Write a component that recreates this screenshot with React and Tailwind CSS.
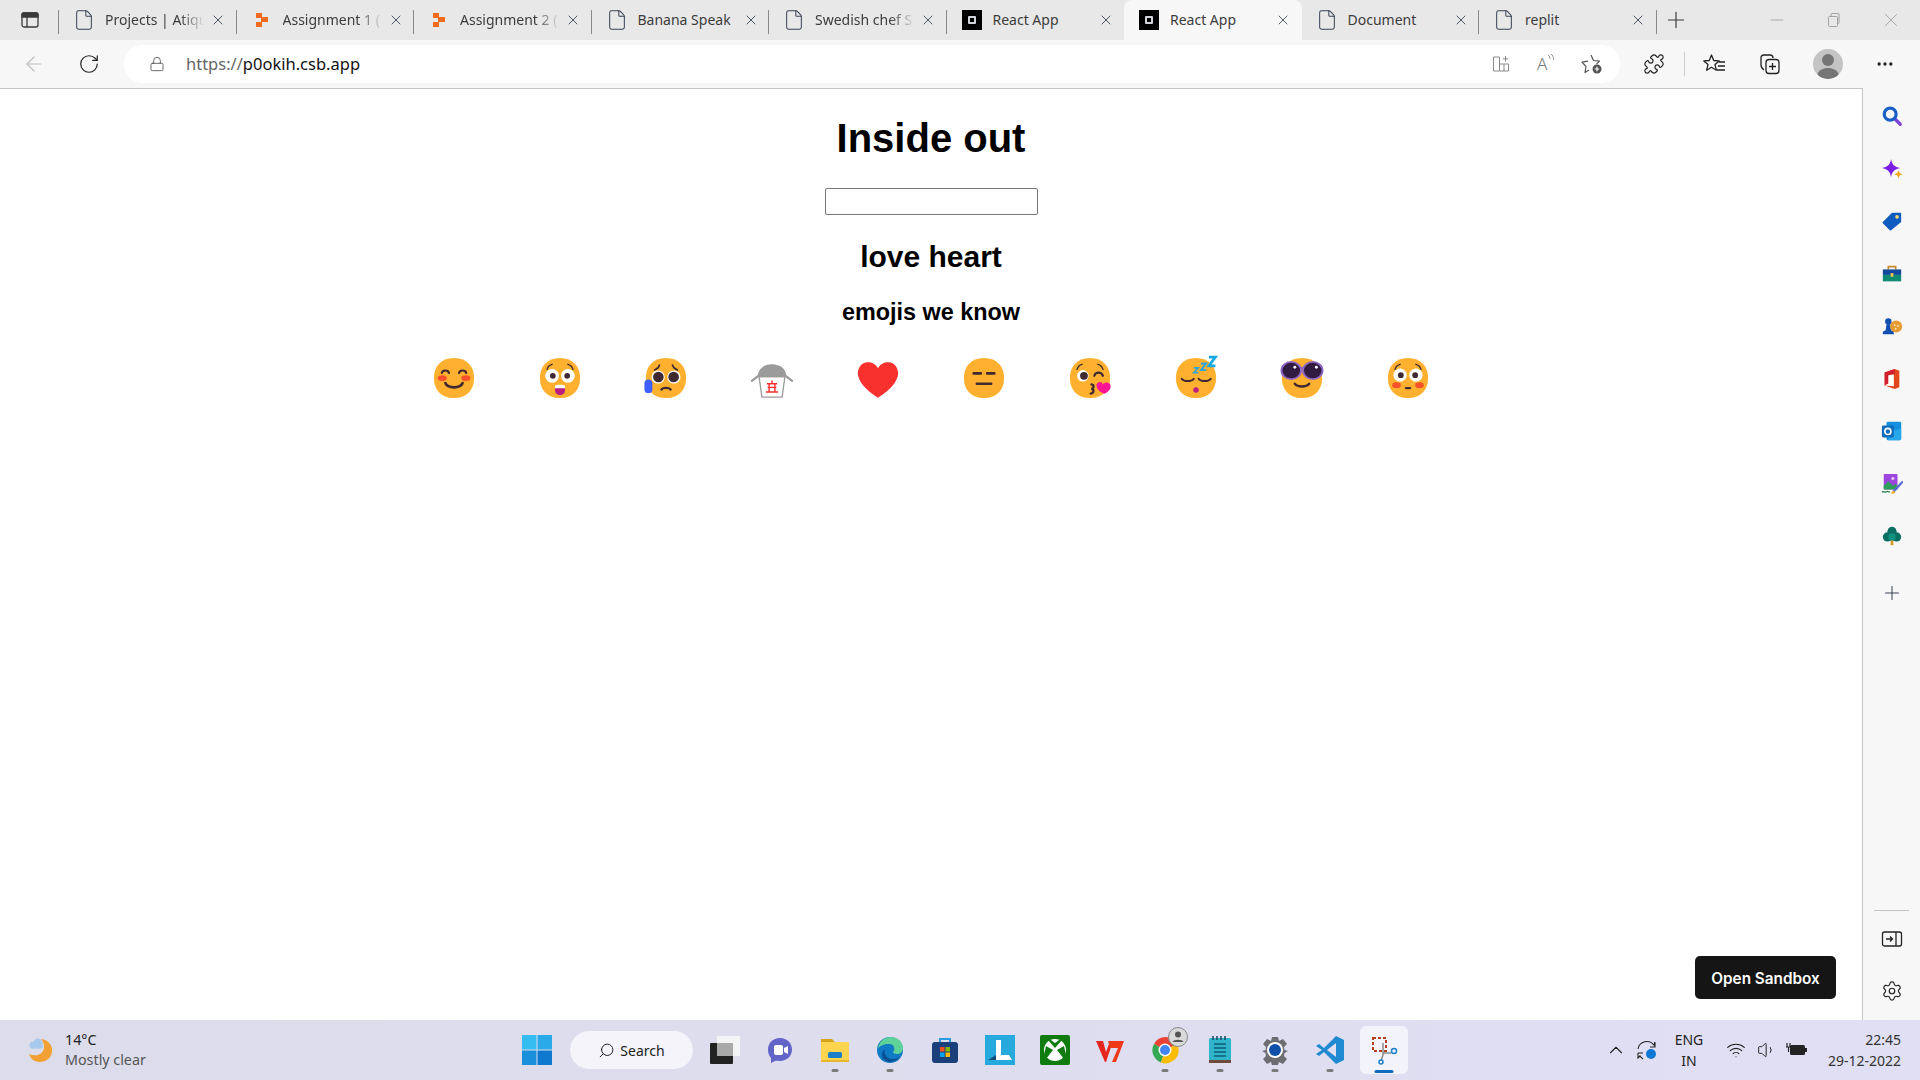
import React from "react";
import { ArrowLeft, ChevronUp, File, Lock, Minus, MoreHorizontal, Plus, Puzzle, RotateCw, Search, Settings, Volume1, Wifi, X } from "lucide-react";

const FACE = "M15.999 29.998c9.334 0 13.999-6.268 13.999-14 0-7.73-4.665-13.998-14-13.998C6.665 2 2 8.268 2 15.999s4.664 13.999 13.999 13.999Z";
const DARK = "#402A32";
const BLUSH = "#F8502A";

function Emoji({ children, face = true }) {
  return (
    <svg viewBox="0 0 32 32" className="w-[46px] h-[46px] shrink-0 overflow-visible" fill="none">
      {face && <path d={FACE} fill="#FFB02E" />}
      {children}
    </svg>
  );
}

const Arc = ({ d, w = 1.5, c = DARK }) => <path d={d} stroke={c} strokeWidth={w} strokeLinecap="round" fill="none" />;

const Brows = () => (
  <>
    <Arc d="M7 10C7.600 8 9 6.800 10.500 6.500" w={1} />
    <Arc d="M25 10C24.400 8 23 6.800 21.500 6.500" w={1} />
  </>
);

const WideEyes = ({ cy = 14.500, r = 4.800, p = 2 }) => (
  <>
    <circle cx="10.500" cy={cy} r={r} fill="white" />
    <circle cx="21.500" cy={cy} r={r} fill="white" />
    <circle cx="11" cy={cy} r={p} fill={DARK} />
    <circle cx="21" cy={cy} r={p} fill={DARK} />
  </>
);

const EMOJIS = [
  <Emoji key="1">
    <ellipse cx="7.800" cy="16" rx="3.200" ry="2" fill={BLUSH} />
    <ellipse cx="24.200" cy="16" rx="3.200" ry="2" fill={BLUSH} />
    <Arc d="M7.500 12.500C8 10.200 12 10.200 12.500 12.500" w={1.500} />
    <Arc d="M19.500 12.500C20 10.200 24 10.200 24.500 12.500" w={1.500} />
    <Arc d="M10 19.500C11.500 23.500 20.500 23.500 22 19.500" w={1.800} />
  </Emoji>,
  <Emoji key="2">
    <Brows />
    <WideEyes />
    <path d="M12.500 22h7v2.500a3.500 3.500 0 0 1-7 0Z" fill="#BB1D80" />
    <path d="M12.500 21.500c1-1 6-1 7 0v1.600h-7Z" fill="white" />
  </Emoji>,
  <Emoji key="3">
    <Arc d="M8 10.500C9.400 10 11 8.700 11.500 7" w={1.100} />
    <Arc d="M24 10.500C22.600 10 21 8.700 20.500 7" w={1.100} />
    <circle cx="10.500" cy="15.300" r="4.600" fill="white" />
    <circle cx="21.500" cy="15.300" r="4.600" fill="white" />
    <circle cx="10.700" cy="15.300" r="3.700" fill={DARK} />
    <circle cx="21.300" cy="15.300" r="3.700" fill={DARK} />
    <Arc d="M12.800 24C14 22.500 18 22.500 19.200 24" w={1.600} />
    <rect x="1" y="17" width="5.500" height="9.500" rx="2.700" fill="#3F5FFF" />
  </Emoji>,
  <Emoji key="4" face={false}>
    <path d="M7 15h18l-2 14.300H9Z" fill="white" stroke="#9B9B9B" strokeWidth="0.900" strokeLinejoin="round" />
    <path d="M6 15.500C6 10 10 6.500 16 6.500s10 3.500 10 9Z" fill="#9B9B9B" />
    <path d="M2 18l4.500-3.500M30 18l-4.500-3.500" stroke="#9B9B9B" strokeWidth="1.500" strokeLinecap="round" />
    <path d="M12.500 20h7M13 22.500h6M11.800 25.800h8.400M14 20v5.800M18 20v5.800M16 17.800V20" stroke="#F8312F" strokeWidth="1" />
  </Emoji>,
  <Emoji key="5" face={false}>
    <path d="M21.008 5.162c-2.84.509-5.011 3.905-5.011 3.905s-2.18-3.396-5.012-3.905c-7.012-1.25-9.903 4.993-8.732 9.64 1.73 6.863 9.254 11.96 13.744 14.97 4.49-3.01 12.014-8.107 13.744-14.97 1.16-4.647-1.73-10.89-8.733-9.64Z" fill="#F8312F" />
  </Emoji>,
  <Emoji key="6">
    <Arc d="M8.800 12.800h5M18.200 12.800h5" w={1.800} />
    <Arc d="M11 20h10" w={1.800} />
  </Emoji>,
  <Emoji key="7">
    <Brows />
    <circle cx="11" cy="14.500" r="4" fill="white" />
    <circle cx="11.800" cy="14.500" r="2.700" fill={DARK} />
    <Arc d="M19 14.500C19.800 11.500 24 11.500 25 14.500" w={1.500} />
    <Arc d="M17 20.500c2 .4 2 2.500 0 3 2 .5 2 3 -0.500 3.300" w={1.600} />
    <path d="M25 20.300c-.8-2.600-4.600-1.800-4.500 1 .1 2.700 3 5 5.500 5.700 2.300-1 4.800-3.100 4.300-5.800-.5-2.500-4-2.500-5.300-.9Z" fill="#FF1493" />
  </Emoji>,
  <Emoji key="8">
    <Arc d="M6 16.500c1.500 2.200 7 2.200 8.500 0" w={1.400} />
    <Arc d="M17.800 16.500c1.500 2.200 7 2.200 8.500 0" w={1.400} />
    <circle cx="16" cy="24.300" r="1.900" fill="#BB1D80" />
    <path d="M14.500 9h3l-3 3.300h3" stroke="#2FA5D8" strokeWidth="1.200" fill="none" />
    <path d="M19.500 6h3.500l-3.500 4.500h3.500" stroke="#2FA5D8" strokeWidth="1.400" fill="none" />
    <path d="M25 1.500h4.500L25 7.500h4.500" stroke="#17A8E0" strokeWidth="1.900" fill="none" />
  </Emoji>,
  <Emoji key="9">
    <Arc d="M11 20c2 2.500 8 2.500 10 0" w={1.700} />
    <path d="M14 9h4" stroke="#8D65C5" strokeWidth="1.500" />
    <ellipse cx="8.500" cy="10.800" rx="6.800" ry="6" fill="#321B41" stroke="#8D65C5" strokeWidth="1.300" />
    <ellipse cx="23.500" cy="10.800" rx="6.800" ry="6" fill="#321B41" stroke="#8D65C5" strokeWidth="1.300" />
    <circle cx="11" cy="8.500" r="1" fill="white" />
    <circle cx="26" cy="8.500" r="1" fill="white" />
  </Emoji>,
  <Emoji key="10">
    <Brows />
    <WideEyes cy={14} r={4.600} />
    <ellipse cx="8" cy="21" rx="3" ry="2" fill={BLUSH} />
    <ellipse cx="24" cy="21" rx="3" ry="2" fill={BLUSH} />
    <Arc d="M14.500 23h3" w={1.500} />
  </Emoji>,
];

const TABS = [
  { title: "Projects | Atiqu", icon: "doc", fade: true },
  { title: "Assignment 1 (", icon: "csb", fade: true },
  { title: "Assignment 2 (", icon: "csb", fade: true },
  { title: "Banana Speak", icon: "doc" },
  { title: "Swedish chef S", icon: "doc", fade: true },
  { title: "React App", icon: "react" },
  { title: "React App", icon: "react", active: true },
  { title: "Document", icon: "doc" },
  { title: "replit", icon: "doc" },
];

function Favicon({ type }) {
  if (type === "csb") {
    return (
      <svg viewBox="0 0 16 16" className="w-4 h-4 shrink-0">
        <path d="M2 1h6v4h6v5H8v5H2v-5h5V6H2Z" fill="#F26A1B" />
        <path d="M2 6h5v3H2Z" fill="#e8e8e8" />
      </svg>
    );
  }
  if (type === "react") {
    return (
      <div className="w-5 h-5 shrink-0 bg-black flex items-center justify-center">
        <div className="w-2 h-2 border-2 border-gray-300 rounded-[1px]" />
      </div>
    );
  }
  return <File className="w-[22px] h-[22px] shrink-0 text-gray-700" strokeWidth={1.100} />;
}

function Tab({ tab, hideSep }) {
  return (
    <div className={`relative w-[177.5px] h-10 shrink-0 flex items-center ${tab.active ? "bg-[#f7f7f7] rounded-t-lg" : ""}`}>
      <div className="w-[46px] shrink-0 flex justify-center pl-1">
        <Favicon type={tab.icon} />
      </div>
      <span
        className={`w-[104px] pb-[2px] overflow-hidden whitespace-nowrap text-[14px] text-[#3c3c3c] ${
          tab.fade ? "[mask-image:linear-gradient(to_right,black_72%,transparent_96%)]" : ""
        }`}
      >
        {tab.title}
      </span>
      <X className="ml-[1px] w-4 h-4 text-gray-700" strokeWidth={1.300} />
      {!hideSep && <div className="absolute right-0 top-[10px] h-6 w-px bg-[#8a8a8a]" />}
    </div>
  );
}

function SidebarIcons() {
  return (
    <div className="flex flex-col items-center gap-[30.500px] pt-[17px]">
      <svg viewBox="0 0 24 24" className="w-[22px] h-[22px]">
        <path d="m15 15 6 6" stroke="#7C3FD8" strokeWidth="3.500" strokeLinecap="round" />
        <circle cx="10" cy="10" r="6.500" fill="none" stroke="#1B5FC8" strokeWidth="3.500" />
      </svg>
      <svg viewBox="0 0 24 24" className="w-[22px] h-[22px]">
        <path d="M11 1c1 6 3.500 8.500 10 10-6.500 1.500-9 4-10 10-1-6-3.500-8.500-10-10C7.500 9.500 10 7 11 1Z" fill="#7A1FE0" />
        <path d="M19 13c.5 2.500 1.500 3.500 4.500 5-3 .5-4 1.500-4.500 5-.5-3.500-1.500-4.500-4.500-5 3-1.500 4-2.500 4.500-5Z" fill="#F2A91E" />
      </svg>
      <svg viewBox="0 0 24 24" className="w-[22px] h-[22px]">
        <path d="M12 3h9a1 1 0 0 1 1 1v9L11 22a1 1 0 0 1-1.400 0L2 14.500a1 1 0 0 1 0-1.500Z" fill="#0F5CC0" />
        <circle cx="17.500" cy="7.500" r="2" fill="#F7D774" />
      </svg>
      <svg viewBox="0 0 24 24" className="w-[22px] h-[22px]">
        <path d="M8 7V4h8v3" fill="none" stroke="#C98A2B" strokeWidth="1.800" />
        <rect x="2" y="7" width="20" height="6" fill="#114A9C" />
        <rect x="2" y="13" width="20" height="7" fill="#0E8A72" />
        <rect x="10.500" y="11" width="3" height="4" fill="#F2C14E" />
      </svg>
      <svg viewBox="0 0 24 24" className="w-[22px] h-[22px]">
        <circle cx="8" cy="7" r="3.500" fill="#114FB0" />
        <path d="M6 10h4l1 7H5ZM2 20c0-2 1-3 3-3h6c2 0 3 1 3 3v1H2Z" fill="#114FB0" />
        <circle cx="16.500" cy="12.500" r="6.500" fill="#E79A2F" />
        <circle cx="15" cy="11" r="1" fill="#FCE9C0" />
        <circle cx="18.500" cy="12" r="1" fill="#FCE9C0" />
        <circle cx="16" cy="15" r="1" fill="#FCE9C0" />
      </svg>
      <svg viewBox="0 0 24 24" className="w-[22px] h-[22px]">
        <path d="M15 1 4 5v14l11 4 5-2V3Z" fill="#E3461B" />
        <path d="M4 5v14l4-2V8l7-2V1Z" fill="#D11E2F" />
        <path d="M8 8l6-1v13l-10-1 4-2Z" fill="white" />
      </svg>
      <svg viewBox="0 0 24 24" className="w-[22px] h-[22px]">
        <rect x="6" y="2" width="16" height="20" rx="1.500" fill="#1490DF" />
        <path d="M10 13l12-4v11a2 2 0 0 1-2 2H8Z" fill="#28A8EA" />
        <rect x="1" y="6" width="13" height="13" rx="1.500" fill="#0F6CBD" />
        <circle cx="7.500" cy="12.500" r="3.300" fill="none" stroke="white" strokeWidth="1.800" />
      </svg>
      <svg viewBox="0 0 24 24" className="w-[22px] h-[22px]">
        <rect x="3" y="1" width="15" height="17" rx="1" fill="#9C46E0" />
        <path d="M3 14l5-5 5 5 3-2 2 2v4H3Z" fill="#2E9E5B" />
        <circle cx="13" cy="6" r="1.800" fill="#E7B7FF" />
        <path d="M23 10 14 20" stroke="#5C6BD8" strokeWidth="2.500" strokeLinecap="round" />
        <path d="M13 19l3 2-3 2-2-1Z" fill="#F0B52E" />
        <path d="M1 21c2-2 3 1 5-.5s2 1 4 0" fill="none" stroke="#1F7A45" strokeWidth="1.200" />
      </svg>
      <svg viewBox="0 0 24 24" className="w-[22px] h-[22px]">
        <rect x="10.500" y="16" width="3" height="6" fill="#D69A2B" />
        <circle cx="12" cy="7" r="5" fill="#0D6E63" />
        <circle cx="7" cy="13" r="5" fill="#0D6E63" />
        <circle cx="17" cy="13" r="5" fill="#0D6E63" />
        <circle cx="12" cy="13" r="4" fill="#14917F" />
      </svg>
      <Plus className="mt-[4px] w-[22px] h-[22px] text-gray-700" strokeWidth={1.100} />
    </div>
  );
}

const TASKBAR_ICONS = [
  { id: "view", node: (
    <svg viewBox="0 0 30 30" className="w-[30px] h-[30px]">
      <rect x="7" y="1" width="23" height="20" fill="#f4f4f4" />
      <rect x="0" y="8" width="23" height="21" rx="1" fill="#222" />
      <rect x="7" y="8" width="16" height="13" fill="#a9a9a9" />
    </svg>
  ) },
  { id: "chat", node: (
    <svg viewBox="0 0 30 30" className="w-[30px] h-[30px]">
      <path d="M15 3c7 0 12 5 12 11.500S22 26 15 26c-2 0-4-.5-5 0l-4 2v-5c-2-2-3-5-3-8.500C3 8 8 3 15 3Z" fill="#6264C8" />
      <rect x="9" y="10" width="9" height="10" rx="2" fill="white" />
      <path d="M19 13l4-2v8l-4-2Z" fill="white" />
    </svg>
  ) },
  { id: "files", dot: true, node: (
    <svg viewBox="0 0 30 30" className="w-[30px] h-[30px]">
      <path d="M1 4h11l3 3H1Z" fill="#D9A21B" />
      <rect x="1" y="7" width="28" height="20" fill="#FFD44F" />
      <rect x="8" y="17" width="14" height="6" rx="1.500" fill="#1C7FC8" />
      <rect x="1" y="25" width="28" height="2" fill="#E8B72E" />
    </svg>
  ) },
  { id: "edge", dot: true, node: (
    <svg viewBox="0 0 30 30" className="w-[30px] h-[30px]">
      <circle cx="15" cy="15" r="13" fill="#0F7BC4" />
      <path d="M3 14C4 6 10 2 16 2c7 0 12 5 12 11 0 4-3 6-6 6-2 0-4-1-4-2 3-3 1-8-4-8-5 0-10 2-11 5Z" fill="#5FD29A" />
      <path d="M10 14c-2 5 2 10 8 10 3 0 5-1 7-3-3 6-10 7-14 5C6 24 6 17 10 14Z" fill="#0B4F96" />
    </svg>
  ) },
  { id: "store", node: (
    <svg viewBox="0 0 30 30" className="w-[30px] h-[30px]">
      <path d="M10 8V4h10v4" fill="none" stroke="#2B9BE0" strokeWidth="2" />
      <rect x="2" y="7" width="26" height="21" rx="3" fill="#1A3F7A" />
      <rect x="10" y="12" width="4.500" height="4.500" fill="#F25022" />
      <rect x="15.500" y="12" width="4.500" height="4.500" fill="#7FBA00" />
      <rect x="10" y="17.500" width="4.500" height="4.500" fill="#00A4EF" />
      <rect x="15.500" y="17.500" width="4.500" height="4.500" fill="#FFB900" />
    </svg>
  ) },
  { id: "lumion", node: (
    <svg viewBox="0 0 30 30" className="w-[30px] h-[30px]">
      <rect width="30" height="30" fill="#26A9DC" />
      <path d="M11 5h5v15h8l3 5H11Z" fill="white" />
      <path d="M3 25h8v-5Z" fill="#124E7A" />
    </svg>
  ) },
  { id: "xbox", node: (
    <svg viewBox="0 0 30 30" className="w-[30px] h-[30px]">
      <rect width="30" height="30" rx="2" fill="#107C10" />
      <circle cx="15" cy="15" r="11" fill="white" />
      <path d="M15 13 8 5h3l4 3 4-3h3ZM13 15l-7 9-2-4 2-9ZM17 15l7 9 2-4-2-9Z" fill="#107C10" />
    </svg>
  ) },
  { id: "wps", node: (
    <svg viewBox="0 0 30 30" className="w-[30px] h-[30px]">
      <path d="M1 6h7l3 11 3-8h3l-6 18H10Z" fill="#E5261F" />
      <path d="M13 6h16l-8 21h-4l6-14h-8Z" fill="#F03A17" />
    </svg>
  ) },
  { id: "chrome", dot: true, node: (
    <div className="relative w-[30px] h-[30px]">
      <svg viewBox="0 0 30 30" className="w-[30px] h-[30px]">
        <path d="M15 15 4 9a13 13 0 0 1 23 0Z" fill="#EA4335" />
        <path d="M15 15 4 9a13 13 0 0 0 7 18.500Z" fill="#34A853" />
        <path d="M15 15l12-6a13 13 0 0 1-16 18.500Z" fill="#FBBC05" />
        <circle cx="15" cy="15" r="6.500" fill="white" />
        <circle cx="15" cy="15" r="5" fill="#4285F4" />
      </svg>
      <svg viewBox="0 0 20 20" className="absolute -top-2 -right-2 w-5 h-5">
        <circle cx="10" cy="10" r="9.500" fill="#d9d9d9" stroke="#888" />
        <circle cx="10" cy="7.500" r="3" fill="#555" />
        <path d="M4.500 15c1-3 10-3 11 0Z" fill="#555" />
      </svg>
    </div>
  ) },
  { id: "notepad", dot: true, node: (
    <svg viewBox="0 0 30 30" className="w-[30px] h-[30px]">
      <rect x="4" y="3" width="22" height="23" rx="1.500" fill="#2FB4C9" />
      <path d="M9 9h12M9 13h12M9 17h12M9 21h12" stroke="#0E5E78" strokeWidth="1.500" />
      <path d="M8 1v4M12 1v4M16 1v4M20 1v4" stroke="#18465C" strokeWidth="1.500" />
      <rect x="4" y="25" width="22" height="3" fill="#6D4A3A" />
    </svg>
  ) },
  { id: "settings", dot: true, node: (
    <svg viewBox="0 0 30 30" className="w-[30px] h-[30px]">
      <path d="M12 2h6l1 4 4-2 4 5-3 3 .5 3 3.500 1v0l-3.500 2-.5 3 3 3-4 5-4-2-1 3h-6l-1-3-4 2-4-5 3-3-.5-3-3.500-2 3.500-1 .5-3-3-3 4-5 4 2Z" fill="#6E6E72" />
      <circle cx="15" cy="15" r="8" fill="white" />
      <circle cx="15" cy="15" r="6" fill="#0F4FA8" />
    </svg>
  ) },
  { id: "vscode", dot: true, node: (
    <svg viewBox="0 0 30 30" className="w-[30px] h-[30px]">
      <path d="M21 1l8 4v20l-8 4-12-12-5 4-3-2 6-4-6-4 3-2 5 4Z" fill="#1F8AD2" />
      <path d="M21 8v14l-9-7Z" fill="#e0dff3" />
    </svg>
  ) },
  { id: "snip", active: true, node: (
    <svg viewBox="0 0 30 30" className="w-[30px] h-[30px]">
      <rect x="4" y="3" width="13" height="13" fill="none" stroke="#B3401F" strokeWidth="2" strokeDasharray="3 2" />
      <path d="M14 8v12l-2 6M14 18h8" stroke="#8a8a8a" strokeWidth="1.500" fill="none" />
      <circle cx="25" cy="16" r="2.500" fill="none" stroke="#1C7FC8" strokeWidth="1.500" />
      <circle cx="12" cy="27" r="2" fill="none" stroke="#1C7FC8" strokeWidth="1.500" />
    </svg>
  ) },
];

export default function App() {
  return (
    <div className="w-[1920px] h-[1080px] overflow-hidden flex flex-col bg-white font-['Noto_Sans',sans-serif]">
      {/* tab strip */}
      <div className="h-10 bg-[#e8e8e8] flex items-center shrink-0">
        <div className="relative w-[59px] h-10 shrink-0 flex items-center justify-center">
          <svg viewBox="0 0 20 20" className="w-5 h-5" fill="none" stroke="#3a3a3a" strokeWidth="1.300">
            <rect x="2" y="3" width="16" height="14" rx="2" />
            <path d="M2 4.500a1.500 1.500 0 0 1 1.500-1.500h13A1.500 1.500 0 0 1 18 4.500V7H2Z" fill="#3a3a3a" />
            <path d="M7 7v10" />
          </svg>
          <div className="absolute right-0 top-[10px] h-6 w-px bg-[#8a8a8a]" />
        </div>
        {TABS.map((t, i) => (
          <Tab key={i} tab={t} hideSep={t.active || TABS[i + 1]?.active} />
        ))}
        <Plus className="ml-[6px] w-[26px] h-[26px] text-[#3a3a3a]" strokeWidth={1.100} />
        <div className="ml-auto flex items-center text-[#9a9a9a]">
          <Minus className="w-5 h-5 mr-[39px]" strokeWidth={0.900} />
          <svg viewBox="0 0 16 16" className="w-4 h-4 mr-[38px]" fill="none" stroke="#9a9a9a" strokeWidth="0.900">
            <rect x="2.500" y="4.500" width="9" height="10" rx="1" />
            <path d="M5 4.500V2.500a1 1 0 0 1 1-1h6a1 1 0 0 1 1 1v8a1 1 0 0 1-1 1h-.500" />
          </svg>
          <X className="w-[22px] h-[22px] mr-[18px]" strokeWidth={0.900} />
        </div>
      </div>

      {/* toolbar */}
      <div className="h-12 bg-[#f7f7f7] flex items-center shrink-0">
        <ArrowLeft className="ml-[22px] w-6 h-6 text-[#bdbdbd]" strokeWidth={1.200} />
        <RotateCw className="ml-[32px] w-[22px] h-[22px] text-[#222]" strokeWidth={1.300} />
        <div className="ml-[24px] w-[1496px] h-[38px] bg-white rounded-full flex items-center">
          <Lock className="ml-[25px] w-[16px] h-[18px] text-[#555]" strokeWidth={1.300} />
          <span className="ml-[21px] text-[16.500px] text-[#666]">
            https://<span className="text-[#111]">p0okih.csb.app</span>
          </span>
          <div className="ml-auto mr-[17px] flex items-center">
            <svg viewBox="0 0 20 20" className="w-5 h-5" fill="none" stroke="#8a8a8a" strokeWidth="1">
              <path d="M2.500 3h6v14h-6ZM8.500 10h9v7h-9ZM13 10v7M14.500 2v5.500M11.800 4.800h5.500" />
            </svg>
            <div className="ml-[26px] w-5 h-5 flex items-start text-[#777] text-[17px] leading-5 font-light">
              A
              <svg viewBox="0 0 8 10" className="w-2 h-[10px]" fill="none" stroke="#777" strokeWidth="0.800">
                <path d="M1 1c2 1 2 3 2 4M3.500 0c3 1 3 4 3 6" />
              </svg>
            </div>
            <svg viewBox="0 0 22 22" className="ml-[24px] w-[22px] h-[22px]" fill="none" stroke="#555" strokeWidth="1.200">
              <path d="M10 2l2.500 5.500 6 .7-3 3M8 17l-4 2.500 1-6L1 9.200l6-1" strokeLinejoin="round" />
              <circle cx="16" cy="16" r="4.500" fill="#555" stroke="none" />
              <path d="M16 13.800v4.400M13.800 16h4.400" stroke="white" />
            </svg>
          </div>
        </div>
        <Puzzle className="ml-[23px] w-[22px] h-[22px] text-[#222]" strokeWidth={1.300} />
        <div className="ml-[19px] h-6 w-px bg-[#ccc]" />
        <svg viewBox="0 0 24 24" className="ml-[17px] w-6 h-6" fill="none" stroke="#222" strokeWidth="1.300">
          <path d="M9.500 3l2.200 5.500 5.500.4-4.200 3.700 1.400 5.600-4.900-3-4.900 3 1.400-5.600L1.800 8.900l5.500-.4Z" strokeLinejoin="round" />
          <path d="M17 10h6M16 14h7M15 18h8" />
        </svg>
        <svg viewBox="0 0 24 24" className="ml-[32px] w-6 h-6" fill="none" stroke="#222" strokeWidth="1.300">
          <path d="M6 18c-1.500-1-3-3-3-5V6a3 3 0 0 1 3-3h6c1.500 0 3 1 3 3" />
          <rect x="8" y="7.500" width="13" height="14" rx="3" />
          <path d="M14.500 11v7M11 14.500h7" />
        </svg>
        <svg viewBox="0 0 30 30" className="ml-[31px] w-[30px] h-[30px] rounded-full bg-[#c4c4c4]">
          <circle cx="15" cy="11" r="6" fill="#757575" />
          <path d="M4 27c1-6 6-8 11-8s10 2 11 8a14 14 0 0 1-22 0Z" fill="#757575" />
        </svg>
        <MoreHorizontal className="ml-[32px] w-5 h-5 text-[#222]" />
      </div>

      {/* page and sidebar */}
      <div className="flex-1 flex min-h-0">
        <div className="relative flex-1 border-t border-r border-[#c4c4c4] font-['Liberation_Sans',sans-serif] flex flex-col items-center text-black">
          <h1 className="mt-[26px] text-[40px] leading-[46px] font-bold">Inside out</h1>
          <input className="mt-[27px] w-[213px] h-[27px] border border-[#767676] rounded-[2px] bg-white" />
          <div className="mt-[24px] text-[30px] leading-[35px] font-bold">love heart</div>
          <div className="mt-[25px] text-[23.400px] leading-[27px] font-bold">emojis we know</div>
          <div className="mt-[29px] flex gap-[60px]">{EMOJIS}</div>
          <div className="absolute right-[26px] bottom-[21px] w-[141px] h-[43px] pt-[4px] rounded-[5px] bg-[#151515] text-white text-[15.300px] font-semibold font-['Inter',sans-serif] flex items-center justify-center">
            Open Sandbox
          </div>
        </div>
        <div className="w-[57px] shrink-0 bg-[#f7f7f7] flex flex-col items-center">
          <SidebarIcons />
          <div className="mt-auto w-[35px] h-px bg-[#c4c4c4]" />
          <svg viewBox="0 0 22 22" className="mt-[17px] w-[22px] h-[22px]" fill="none" stroke="#222" strokeWidth="1.300">
            <rect x="1.500" y="4" width="19" height="14" rx="2" />
            <path d="M15 4v14M5 11h6M9 8.500l2.500 2.500L9 13.500" />
          </svg>
          <Settings className="mt-[30px] mb-[18px] w-[22px] h-[22px] text-[#222]" strokeWidth={1.300} />
        </div>
      </div>

      {/* windows taskbar */}
      <div className="h-[60px] shrink-0 flex items-center bg-gradient-to-r from-[#dcdcea] to-[#e1dff4] text-[#222]">
        <div className="w-[522px] shrink-0 flex items-center pl-[27px]">
          <svg viewBox="0 0 26 30" className="w-[26px] h-[30px]">
            <path d="M14 4c8 1 12 7 11 13-1 8-10 12-17 9-3-1-5-4-6-7 6 3 14 1 15-6 .5-4-1-7-3-9Z" fill="#F2A033" />
            <circle cx="6" cy="10" r="3.500" fill="#A9C8EE" />
            <circle cx="11" cy="8" r="4.500" fill="#A9C8EE" />
            <rect x="3" y="9" width="13" height="4.500" rx="2" fill="#A9C8EE" />
          </svg>
          <div className="ml-[12px] text-[14.300px] leading-[20px]">
            <div>14°C</div>
            <div className="text-[#555]">Mostly clear</div>
          </div>
        </div>
        <svg viewBox="0 0 30 30" className="w-[30px] h-[30px] shrink-0">
          <rect x="0" y="0" width="14.500" height="14.500" fill="#35BDF2" />
          <rect x="15.500" y="0" width="14.500" height="14.500" fill="#2AAAE8" />
          <rect x="0" y="15.500" width="14.500" height="14.500" fill="#1A8FDC" />
          <rect x="15.500" y="15.500" width="14.500" height="14.500" fill="#0F78CF" />
        </svg>
        <div className="ml-[18px] w-[123px] h-[38px] rounded-full bg-[#f4f4fa] flex items-center justify-center text-[14px]">
          <Search className="w-[17px] h-[17px] -scale-x-100 mr-[5px]" strokeWidth={1.400} />
          Search
        </div>
        <div className="ml-[4px] flex">
          {TASKBAR_ICONS.map((item) => (
            <div key={item.id} className={`relative h-[48px] flex items-center justify-center ${item.active ? "bg-[#f3f3fb] rounded-md w-[48px] ml-[3px]" : "w-[55px]"}`}>
              {item.node}
              {item.dot && <div className="absolute bottom-[2px] left-1/2 -translate-x-1/2 w-[7px] h-[3px] rounded-full bg-[#7a7a7a]" />}
              {item.active && <div className="absolute bottom-[1px] left-1/2 -translate-x-1/2 w-[19px] h-[3px] rounded-full bg-[#0f6cbd]" />}
            </div>
          ))}
        </div>
        <div className="ml-auto flex items-center pr-[19px]">
          <ChevronUp className="w-[22px] h-[22px]" strokeWidth={1.200} />
          <svg viewBox="0 0 24 24" className="ml-[8px] w-[24px] h-[24px]" fill="none" stroke="#222" strokeWidth="1.100">
            <path d="M3 11a9 9 0 0 1 16-4l1-3v5h-5M3 15v5l2-2a9 9 0 0 0 3 3M3 15h5" />
            <circle cx="16" cy="16" r="5" fill="#0F78D4" stroke="none" />
          </svg>
          <div className="ml-[10px] w-[40px] text-center text-[14px] leading-[21px]">
            <div>ENG</div>
            <div>IN</div>
          </div>
          <Wifi className="ml-[17px] w-[20px] h-[20px]" strokeWidth={1.300} />
          <Volume1 className="ml-[11px] w-[20px] h-[20px]" strokeWidth={1.200} />
          <svg viewBox="0 0 22 18" className="ml-[8px] w-[22px] h-[18px]">
            <rect x="5" y="4" width="15" height="10" rx="1.500" fill="#222" />
            <rect x="20" y="7" width="2" height="4" fill="#222" />
            <path d="M1 6h5M2 2v4M5 2v4M3.500 6v5" stroke="#222" strokeWidth="1.200" fill="none" />
          </svg>
          <div className="ml-[10px] w-[84px] text-right text-[14px] leading-[21px] text-[#333]">
            <div>22:45</div>
            <div>29-12-2022</div>
          </div>
        </div>
      </div>
    </div>
  );
}
